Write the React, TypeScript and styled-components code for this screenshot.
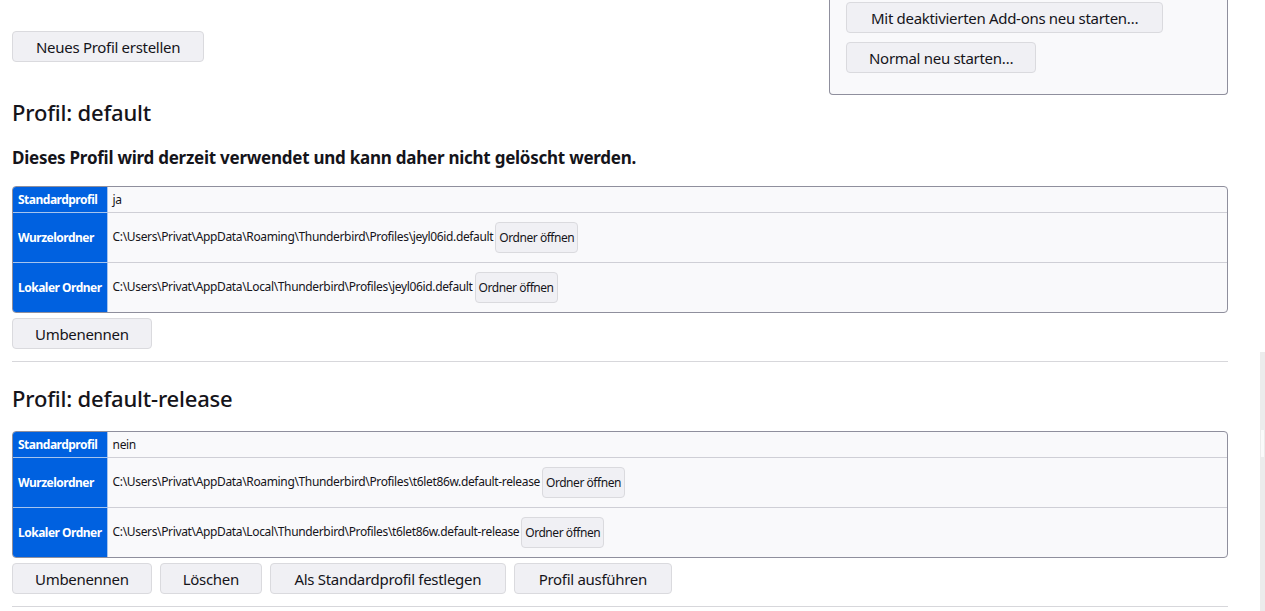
import React from "react";
import styled, { createGlobalStyle } from "styled-components";

const GlobalStyle = createGlobalStyle`
  html, body {
    margin: 0;
    padding: 0;
    background: #ffffff;
  }
  body {
    font-family: "Noto Sans", "Open Sans", sans-serif;
    color: #15141a;
    overflow: hidden;
  }
`;

const Page = styled.div`
  display: flow-root;
  padding: 0 37px 0 12px;
`;

const ActionBox = styled.div`
  float: right;
  width: 399px;
  box-sizing: border-box;
  background: #f9f9fb;
  border: 1px solid #8f8f9d;
  border-top: none;
  border-radius: 0 0 4px 4px;
  padding: 2px 16px 21px;
  display: flex;
  flex-direction: column;
  align-items: flex-start;
  gap: 9px;
`;

const Button = styled.button<{ $pad?: number }>`
  box-sizing: border-box;
  height: 31px;
  padding: 0 ${(p) => p.$pad ?? 22}px;
  font-family: inherit;
  font-size: 15px;
  letter-spacing: -0.3px;
  color: #15141a;
  background: #f0f0f4;
  border: 1px solid #dadade;
  border-radius: 4px;
  cursor: pointer;
  white-space: nowrap;
`;

const FirstButton = styled(Button)`
  margin-top: 31px;
`;

const ProfileTitle = styled.h2<{ $gap: number }>`
  margin: ${(p) => p.$gap}px 0 0;
  font-size: 22px;
  line-height: 30px;
  font-weight: 500;
  letter-spacing: -0.2px;
`;

const InUseNote = styled.p`
  margin: 19px 0 0;
  font-size: 17px;
  line-height: 23px;
  font-weight: 700;
  letter-spacing: -0.25px;
`;

const InfoTable = styled.table<{ $gap: number }>`
  margin-top: ${(p) => p.$gap}px;
  width: 100%;
  border-collapse: separate;
  border-spacing: 0;
  border: 1px solid #8f8f9d;
  border-radius: 4px;
  overflow: hidden;
  background: #f9f9fb;
  font-size: 12px;
  line-height: 17px;
  letter-spacing: -0.35px;
`;

const HeadCell = styled.th<{ $last?: boolean }>`
  background: #0061e0;
  color: #ffffff;
  font-weight: 700;
  text-align: left;
  white-space: nowrap;
  width: 1px;
  padding: 4px 5px;
  letter-spacing: -0.5px;
  border-right: 1px solid #a6c4ee;
  border-bottom: ${(p) => (p.$last ? "none" : "1px solid #a6c4ee")};
`;

const ValueCell = styled.td<{ $last?: boolean }>`
  padding: 4px 5px;
  white-space: nowrap;
  border-bottom: ${(p) => (p.$last ? "none" : "1px solid #cfcfd6")};
`;

const OpenButton = styled.button`
  box-sizing: border-box;
  height: 31px;
  margin: 5px 0 5px 2px;
  padding: 0 3px;
  font-family: inherit;
  font-size: 12px;
  letter-spacing: -0.45px;
  color: #15141a;
  background: #f0f0f4;
  border: 1px solid #dadade;
  border-radius: 4px;
  vertical-align: middle;
`;

const ButtonRow = styled.div`
  margin-top: 5px;
  display: flex;
  gap: 8px;
`;

const Divider = styled.hr`
  margin: 12px 0 0;
  border: none;
  border-top: 1px solid #d7d7db;
`;

const ScrollTrack = styled.div`
  position: fixed;
  right: 0;
  top: 352px;
  bottom: 0;
  width: 5px;
  background: #ececec;
`;

const TrackNotch = styled.div`
  position: absolute;
  left: 1px;
  top: 78px;
  width: 3px;
  height: 27px;
  background: #fafafa;
`;

type Profile = {
  name: string;
  isDefault: boolean;
  root: string;
  local: string;
  inUse: boolean;
};

const profiles: Profile[] = [
  {
    name: "default",
    isDefault: true,
    root: "C:\\Users\\Privat\\AppData\\Roaming\\Thunderbird\\Profiles\\jeyl06id.default",
    local: "C:\\Users\\Privat\\AppData\\Local\\Thunderbird\\Profiles\\jeyl06id.default",
    inUse: true,
  },
  {
    name: "default-release",
    isDefault: false,
    root: "C:\\Users\\Privat\\AppData\\Roaming\\Thunderbird\\Profiles\\t6let86w.default-release",
    local: "C:\\Users\\Privat\\AppData\\Local\\Thunderbird\\Profiles\\t6let86w.default-release",
    inUse: false,
  },
];

function ProfileSection({ p, first }: { p: Profile; first: boolean }) {
  return (
    <section>
      <ProfileTitle $gap={first ? 35 : 21}>Profil: {p.name}</ProfileTitle>
      {p.inUse && (
        <InUseNote>Dieses Profil wird derzeit verwendet und kann daher nicht gelöscht werden.</InUseNote>
      )}
      <InfoTable $gap={p.inUse ? 17 : 18}>
        <tbody>
          <tr>
            <HeadCell>Standardprofil</HeadCell>
            <ValueCell>{p.isDefault ? "ja" : "nein"}</ValueCell>
          </tr>
          <tr>
            <HeadCell>Wurzelordner</HeadCell>
            <ValueCell>
              {p.root}
              <OpenButton>Ordner öffnen</OpenButton>
            </ValueCell>
          </tr>
          <tr>
            <HeadCell $last>Lokaler Ordner</HeadCell>
            <ValueCell $last>
              {p.local}
              <OpenButton>Ordner öffnen</OpenButton>
            </ValueCell>
          </tr>
        </tbody>
      </InfoTable>
      <ButtonRow>
        <Button>Umbenennen</Button>
        {!p.inUse && <Button>Löschen</Button>}
        {!p.isDefault && <Button $pad={23.5}>Als Standardprofil festlegen</Button>}
        {!p.inUse && <Button $pad={24}>Profil ausführen</Button>}
      </ButtonRow>
      <Divider />
    </section>
  );
}

export default function App() {
  return (
    <>
      <GlobalStyle />
      <Page>
        <ActionBox>
          <Button $pad={24}>Mit deaktivierten Add-ons neu starten…</Button>
          <Button>Normal neu starten…</Button>
        </ActionBox>
        <FirstButton $pad={23}>Neues Profil erstellen</FirstButton>
        {profiles.map((p, i) => (
          <ProfileSection key={p.name} p={p} first={i === 0} />
        ))}
      </Page>
      <ScrollTrack>
        <TrackNotch />
      </ScrollTrack>
    </>
  );
}
